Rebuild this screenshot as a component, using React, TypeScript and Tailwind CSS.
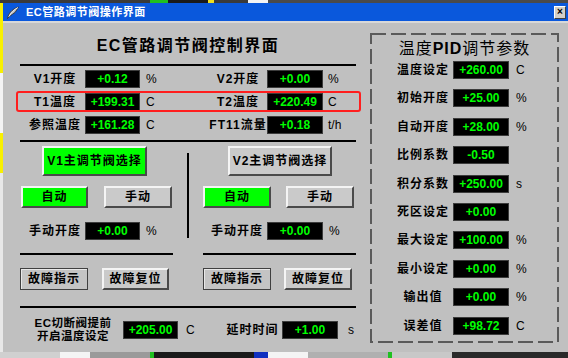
import React from "react";
import clsx from "clsx";

const font = "font-['Liberation_Sans','Noto_Sans_CJK_SC',sans-serif]";

const Value = ({ v, w = "w-[55px]" }: { v: string; w?: string }) => (
  <div
    className={clsx(
      "h-[18px] bg-black border border-[#3c3c3c] text-[#00ff00] text-[12px] font-bold leading-[16px] text-center shrink-0",
      w
    )}
  >
    {v}
  </div>
);

const Label = ({ text, w }: { text: string; w: string }) => (
  <span className={clsx("text-[12px] font-bold tracking-[1px] text-center leading-[18px] text-black shrink-0 whitespace-nowrap", w)}>
    {text}
  </span>
);

const Unit = ({ u, ml }: { u: string; ml: string }) => (
  <span className={clsx("text-[12px] text-black leading-[18px]", ml)}>{u}</span>
);

const Btn = ({
  children,
  green,
  className,
}: {
  children: React.ReactNode;
  green?: boolean;
  className?: string;
}) => (
  <div
    className={clsx(
      "flex items-center justify-center border-2 border-t-[#f4f4f4] border-l-[#f4f4f4] border-b-[#4a4a4a] border-r-[#4a4a4a] text-[12px] font-bold tracking-[1px] text-black shrink-0",
      green ? "bg-[#00ff00]" : "bg-[#cacaca]",
      className
    )}
  >
    {children}
  </div>
);

const FaultBtn = ({ children, flat, className }: { children: React.ReactNode; flat?: boolean; className?: string }) => (
  <div
    className={clsx(
      "flex items-center justify-center h-[22px] text-[12px] font-bold tracking-[1px] text-black shrink-0",
      flat
        ? "border border-[#404040] bg-[#c4c4c4] shadow-[inset_1px_1px_0_#e8e8e8]"
        : "border-2 border-t-[#f4f4f4] border-l-[#f4f4f4] border-b-[#4a4a4a] border-r-[#4a4a4a] bg-[#cacaca]",
      className
    )}
  >
    {children}
  </div>
);

const ValveCol = ({ n, right }: { n: string; right?: boolean }) => (
  <div className="w-[153px] flex flex-col">
    <Btn green={!right} className={clsx("mt-[4px] h-[30px]", right ? "ml-[25px] w-[104px]" : "ml-[22px] w-[105px]")}>
      {n}主调节阀选择
    </Btn>
    <div className="mt-[10px] h-[22px] flex">
      <Btn green className={right ? "w-[68px]" : "ml-[1px] w-[67px]"}>自动</Btn>
      <Btn className={right ? "ml-[15px] w-[68px]" : "ml-[16px] w-[68px]"}>手动</Btn>
    </div>
    <div className={clsx("mt-[14px] h-[18px] flex items-center", right ? "pl-[4px]" : "pl-[5px]")}>
      <Label text="手动开度" w="w-[60px]" />
      <Value v="+0.00" w={right ? "w-[56px]" : "w-[55px]"} />
      <Unit u="%" ml="ml-[6px]" />
    </div>
    <div className="mt-[13px] h-[2px] bg-black" />
    <div className="mt-[13px] flex">
      <FaultBtn flat className="w-[68px]">故障指示</FaultBtn>
      <FaultBtn className={right ? "ml-[13px] w-[68px]" : "ml-[14px] w-[67px]"}>故障复位</FaultBtn>
    </div>
  </div>
);

const DataRow = ({
  a,
  b,
  hl,
}: {
  a: [string, string, string];
  b: [string, string, string];
  hl?: boolean;
}) => (
  <div className="relative h-[18px] flex items-center pl-[5px]">
    <div className="w-[184px] flex items-center">
      <Label text={a[0]} w="w-[60px]" />
      <Value v={a[1]} />
      <Unit u={a[2]} ml="ml-[6px]" />
    </div>
    <div className="flex items-center">
      <Label text={b[0]} w="w-[58px]" />
      <Value v={b[1]} w="w-[56px]" />
      <Unit u={b[2]} ml="ml-[5px]" />
    </div>
    {hl && (
      <div className="absolute -left-[4px] -right-[5px] -top-[2px] -bottom-[1px] border-2 border-[#ff1e1e] rounded-[3px]" />
    )}
  </div>
);

const pid: [string, string, string][] = [
  ["温度设定", "+260.00", "C"],
  ["初始开度", "+25.00", "%"],
  ["自动开度", "+28.00", "%"],
  ["比例系数", "-0.50", ""],
  ["积分系数", "+250.00", "s"],
  ["死区设定", "+0.00", ""],
  ["最大设定", "+100.00", "%"],
  ["最小设定", "+0.00", "%"],
  ["输出值", "+0.00", "%"],
  ["误差值", "+98.72", "C"],
];

export default function App() {
  return (
    <div className={clsx("w-[568px] h-[358px] flex flex-col overflow-hidden bg-[#2a2a2a]", font)}>
      {/* desktop strip above the window */}
      <div className="h-[3px] flex">
        <div className="w-[150px] bg-[#3a3a3a]" />
        <div className="w-[18px] bg-[#20c020]" />
        <div className="w-[40px] bg-[#1a1a1a]" />
        <div className="w-[6px] bg-[#f0e020]" />
        <div className="w-[34px] bg-[#3a3a3a]" />
        <div className="w-[20px] bg-[#f4f4f4]" />
        <div className="flex-1 bg-[#4a4a4a]" />
      </div>

      <div className="flex-1 flex">
        <div className="w-[3px] flex flex-col">
          <div className="h-[70px] bg-[#f8f000]" />
          <div className="h-[60px] bg-[#f4f4f4]" />
          <div className="h-[40px] bg-[#f8f000]" />
          <div className="flex-1 bg-[#e8e8e8]" />
        </div>

        <div className="flex-1 flex flex-col">
          {/* title bar */}
          <div className="h-[18px] bg-[#0a58dc] flex items-center">
            <svg width="12" height="13" viewBox="0 0 12 13" className="ml-[4px]">
              <path d="M0.5 12.5 C1.5 8 4 3.5 11.5 1 C10 3 9.5 5 8 6.5 C6.5 8 4.5 8.5 3 10 Z" fill="#b8b8b8" stroke="#2a2a2a" strokeWidth="0.8" />
              <path d="M2 10.5 C4 7 7 3.5 11 1.5" fill="none" stroke="#f4f4f4" strokeWidth="1" />
            </svg>
            <span className="ml-[7px] text-[11px] font-bold tracking-[0.5px] text-white leading-[18px]">
              EC管路调节阀操作界面
            </span>
            <div className="ml-auto mr-[2px] w-[12px] h-[13px] bg-[#d4d0c8] border border-t-white border-l-white border-b-[#404040] border-r-[#404040] flex items-center justify-center text-[10px] font-bold leading-none text-black">
              ×
            </div>
          </div>
          <div className="h-[2px] bg-[#d8d8d8]" />

          {/* content */}
          <div className="flex-1 bg-[#c0c0c0] flex">
            <div className="ml-[17px] w-[336px] flex flex-col">
              <div className="h-[41px] pt-[13px] text-center text-[16px] font-bold leading-[20px] tracking-[1.5px] text-black">
                EC管路调节阀控制界面
              </div>
              <div className="h-[2px] bg-black" />
              <div className="mt-[4px]">
                <DataRow a={["V1开度", "+0.12", "%"]} b={["V2开度", "+0.00", "%"]} />
              </div>
              <div className="mt-[5px]">
                <DataRow a={["T1温度", "+199.31", "C"]} b={["T2温度", "+220.49", "C"]} hl />
              </div>
              <div className="mt-[5px]">
                <DataRow a={["参照温度", "+161.28", "C"]} b={["FT11流量", "+0.18", "t/h"]} />
              </div>
              <div className="mt-[6px] h-[2px] bg-black" />

              <div className="flex">
                <ValveCol n="V1" />
                <div className="w-[30px] flex justify-center">
                  <div className="mt-[11px] h-[85px] w-[2px] bg-black" />
                </div>
                <ValveCol n="V2" right />
              </div>

              <div className="mt-[16px] h-[2px] bg-black" />
              <div className="mt-[13px] h-[18px] flex items-center">
                <div className="ml-[11px] w-[84px] flex flex-col items-center text-[11.5px] font-bold tracking-[0.5px] leading-[13px] text-black whitespace-nowrap">
                  <span>EC切断阀提前</span>
                  <span>开启温度设定</span>
                </div>
                <div className="ml-[8px]">
                  <Value v="+205.00" />
                </div>
                <span className="ml-[8px] w-[37px] text-[12px] leading-[18px] text-black">C</span>
                <Label text="延时时间" w="w-[59px]" />
                <Value v="+1.00" w="w-[56px]" />
                <Unit u="s" ml="ml-[10px]" />
              </div>
            </div>

            {/* PID panel */}
            <div className="relative ml-[14px] mt-[10px] w-[189px] h-[310px] flex flex-col">
              <svg className="absolute inset-0" width="189" height="310">
                <rect
                  x="1"
                  y="1"
                  width="187"
                  height="308"
                  fill="none"
                  stroke="#5a5a5a"
                  strokeWidth="2"
                  strokeDasharray="15 5"
                />
              </svg>
              <div className="mt-[6px] h-[20px] leading-[20px] text-center text-[16px] tracking-[1px] text-black">
                温度<b>PID</b>调节参数
              </div>
              <div className="mt-[2px] flex flex-col gap-[10.4px]">
                {pid.map(([l, v, u]) => (
                  <div key={l} className="h-[18px] flex items-center">
                    <Label text={l} w="ml-[25px] w-[56px]" />
                    <div className="ml-[2px]">
                      <Value v={v} w="w-[56px]" />
                    </div>
                    <Unit u={u} ml="ml-[7px]" />
                  </div>
                ))}
              </div>
            </div>
          </div>
        </div>
      </div>

      {/* taskbar strip */}
      <div className="h-[6px] flex">
        <div className="w-[60px] bg-[#d0d0d0]" />
        <div className="w-[30px] bg-[#f4f4f4]" />
        <div className="w-[60px] bg-[#9a9a9a]" />
        <div className="w-[4px] bg-[#20c020]" />
        <div className="w-[100px] bg-[#1a1a1a]" />
        <div className="w-[14px] bg-[#1030c0]" />
        <div className="w-[40px] bg-[#f4f4f4]" />
        <div className="w-[80px] bg-[#b0b0b0]" />
        <div className="w-[4px] bg-[#20c020]" />
        <div className="w-[60px] bg-[#c8c8c8]" />
        <div className="flex-1 bg-[#2a2a2a]" />
      </div>
    </div>
  );
}
